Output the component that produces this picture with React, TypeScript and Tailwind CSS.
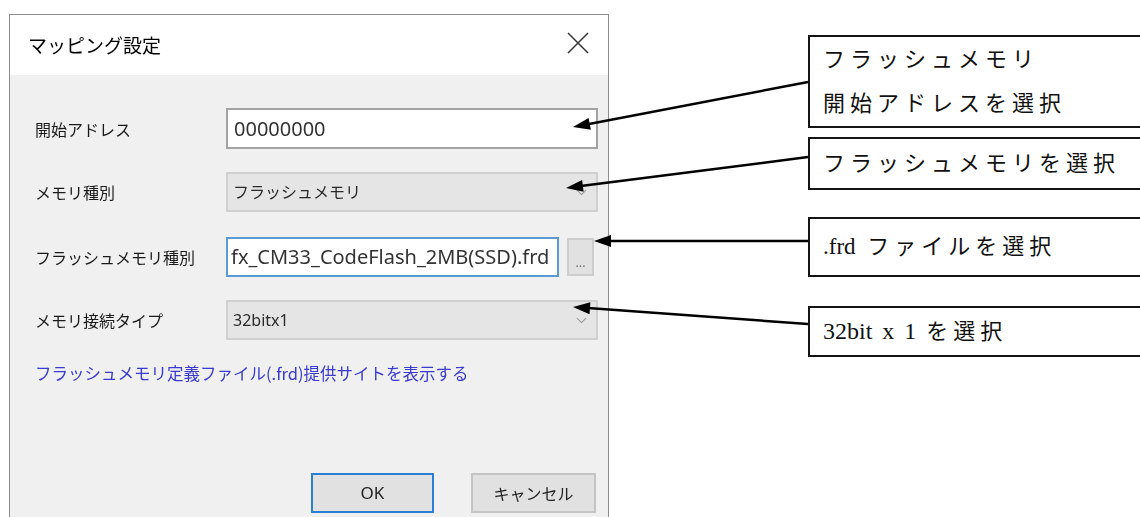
import React from 'react';
import { ChevronDown } from 'lucide-react';

type Arrow = { from: [number, number]; to: [number, number] };

// callout arrows, from the note boxes back to the dialog controls
const arrows: Arrow[] = [
  { from: [808, 82], to: [573, 127] },
  { from: [808, 157], to: [566, 188] },
  { from: [808, 241], to: [594, 241] },
  { from: [808, 324], to: [573, 307] },
];

const ArrowLine = ({ from, to }: Arrow) => {
  const [x1, y1] = from;
  const [x2, y2] = to;
  const len = Math.hypot(x2 - x1, y2 - y1);
  const ux = (x2 - x1) / len;
  const uy = (y2 - y1) / len;
  const head = 17;
  const half = 6;
  const bx = x2 - ux * head;
  const by = y2 - uy * head;
  const points = `${x2},${y2} ${bx - uy * half},${by + ux * half} ${bx + uy * half},${by - ux * half}`;
  return (
    <g>
      <line x1={x1} y1={y1} x2={bx + ux * 2} y2={by + uy * 2} stroke="#000" strokeWidth={2.5} />
      <polygon points={points} fill="#000" />
    </g>
  );
};

const Label = ({ children }: { children: React.ReactNode }) => (
  <div className="w-[191px] shrink-0 text-[16px] text-[#1a1a1a]">{children}</div>
);

const Combo = ({ value }: { value: string }) => (
  <div className="flex h-[40px] flex-1 items-center justify-between border-2 border-[#cfcfcf] bg-[#e5e5e5] pl-[5px] pr-[6px] text-[16px] text-[#2a2a2a]">
    <span className="font-['Noto_Sans','Noto_Sans_CJK_JP',sans-serif]">{value}</span>
    <ChevronDown className="h-[17px] w-[17px] text-[#999]" strokeWidth={1.5} />
  </div>
);

const Note = ({ className, children }: { className: string; children: React.ReactNode }) => (
  <div
    className={`flex w-[360px] flex-col justify-center border-2 border-[#151515] pl-[13px] text-[22px] leading-[44px] tracking-[5px] text-[#111] ${className}`}
  >
    {children}
  </div>
);

export default function App() {
  return (
    <div className="relative flex h-[517px] w-[1140px] overflow-hidden bg-white font-['Noto_Sans_CJK_JP','Noto_Sans',sans-serif]">
      {/* dialog window */}
      <div className="ml-[9px] mt-[14px] flex h-[540px] w-[600px] shrink-0 flex-col border border-[#8c8c8c] blur-[0.35px]">
        <div className="flex h-[60px] items-center justify-between bg-white pl-[18px] pr-[19px]">
          <span className="text-[19px] text-black">マッピング設定</span>
          <svg width="22" height="22" viewBox="0 0 22 22" className="mb-[4px]">
            <path d="M1 1 L21 21 M21 1 L1 21" stroke="#333" strokeWidth="1.5" />
          </svg>
        </div>

        <div className="flex flex-1 flex-col bg-[#f0f0f0] pl-[25px] pr-[10px] pt-[33px]">
          <div className="flex items-center">
            <Label>開始アドレス</Label>
            <div className="flex h-[41px] flex-1 items-center border-2 border-[#a3a3a3] bg-white pl-[6px] font-['Noto_Sans',sans-serif] text-[20px] text-[#333]">
              00000000
            </div>
          </div>

          <div className="mt-[23px] flex items-center">
            <Label>メモリ種別</Label>
            <Combo value="フラッシュメモリ" />
          </div>

          <div className="mt-[25px] flex items-center">
            <Label>フラッシュメモリ種別</Label>
            <div className="mr-[4px] flex flex-1 items-center gap-[8px]">
              <div className="flex h-[40px] flex-1 items-center overflow-hidden border-2 border-[#5b9bd5] bg-white pl-[3px] font-['Noto_Sans',sans-serif] text-[20px] whitespace-nowrap text-[#333]">
                fx_CM33_CodeFlash_2MB(SSD).frd
              </div>
              <div className="flex h-[38px] w-[27px] items-end justify-center border-2 border-[#cdcdcd] bg-[#e1e1e1] pb-[6px] text-[12px] leading-none text-[#666]">
                ...
              </div>
            </div>
          </div>

          <div className="mt-[23px] flex items-center">
            <Label>メモリ接続タイプ</Label>
            <Combo value="32bitx1" />
          </div>

          <div className="mt-[22px] text-[16.5px] leading-[22px] text-[#3a3ad0]">
            フラッシュメモリ定義ファイル(.frd)提供サイトを表示する
          </div>

          <div className="mr-[2px] mt-[89px] flex justify-end gap-[37px]">
            <div className="flex h-[40px] w-[123px] items-center justify-center border-2 border-[#2a7fd4] bg-[#e1e1e1] font-['Noto_Sans',sans-serif] text-[17px] text-[#222]">
              OK
            </div>
            <div className="flex h-[40px] w-[125px] items-center justify-center border-2 border-[#c4c4c4] bg-[#e1e1e1] text-[16px] text-[#222]">
              キャンセル
            </div>
          </div>
        </div>
      </div>

      {/* note boxes */}
      <div className="ml-[199px] flex shrink-0 flex-col font-['Liberation_Serif','Noto_Sans_CJK_JP',serif]">
        <Note className="mt-[35px] h-[93px]">
          <span>フラッシュメモリ</span>
          <span>開始アドレスを選択</span>
        </Note>
        <Note className="mt-[9px] h-[53px]">
          <span>フラッシュメモリを選択</span>
        </Note>
        <Note className="mt-[27px] h-[60px]">
          <span>
            <span className="text-[23px] tracking-normal [word-spacing:6px]">.frd </span>ファイルを選択
          </span>
        </Note>
        <Note className="mt-[29px] h-[51px]">
          <span>
            <span className="text-[24px] tracking-normal [word-spacing:4px]">32bit x 1 </span>を選択
          </span>
        </Note>
      </div>

      <svg className="pointer-events-none absolute inset-0" width="1140" height="517" viewBox="0 0 1140 517">
        {arrows.map((a, i) => (
          <ArrowLine key={i} {...a} />
        ))}
      </svg>
    </div>
  );
}
